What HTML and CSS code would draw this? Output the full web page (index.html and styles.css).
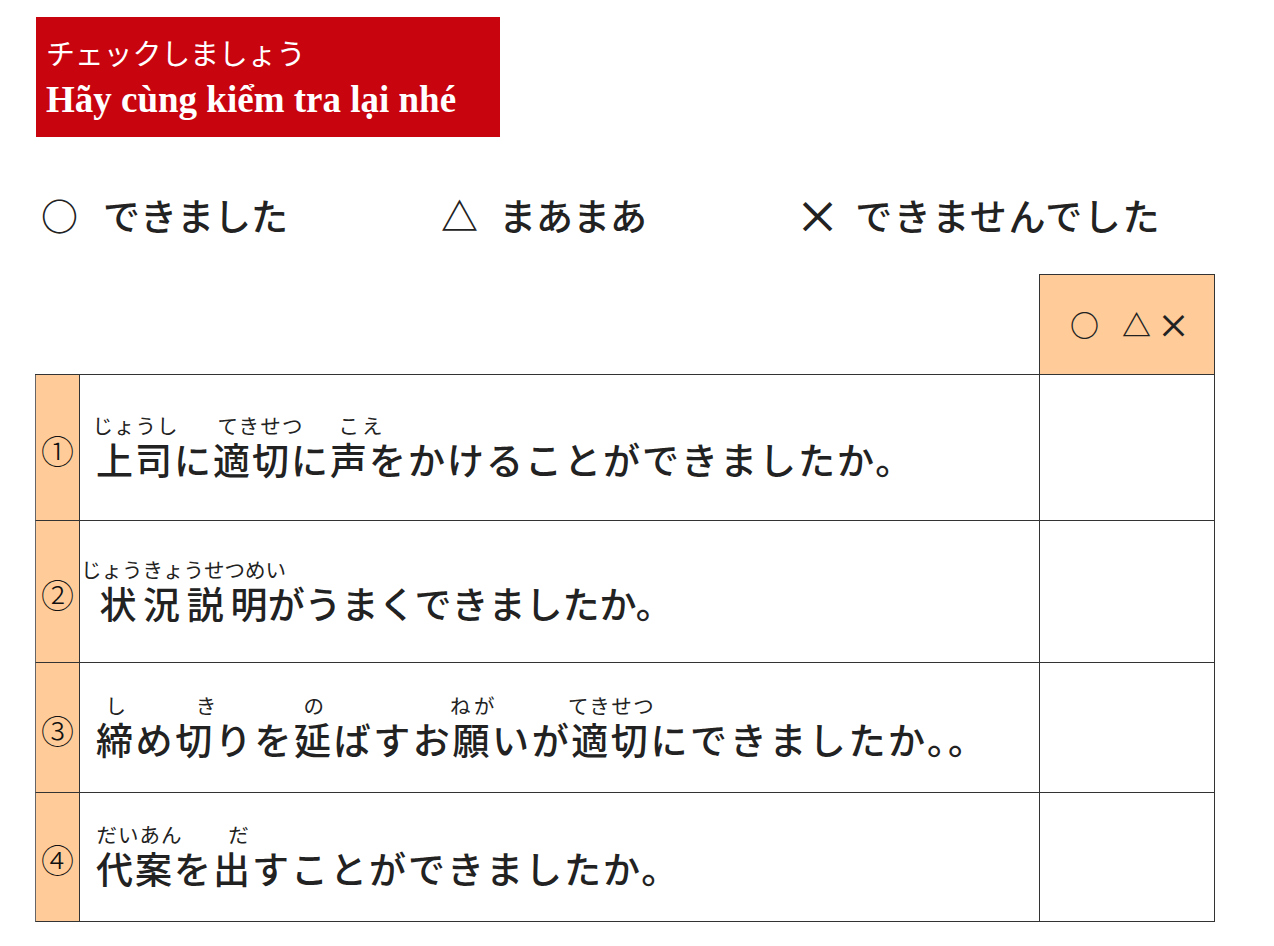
FILE: index.html
```html
<!DOCTYPE html>
<html lang="ja">
<head>
<meta charset="utf-8">
<title>チェックしましょう</title>
<link rel="stylesheet" href="styles.css">
</head>
<body>
<div class="page">
  <div class="banner">
    <div class="banner-jp">チェックしましょう</div>
    <div class="banner-vi" lang="vi">Hãy cùng kiểm tra lại nhé</div>
  </div>

  <div class="legend">
    <div class="legend-item"><span class="sym">○</span><span class="legend-text">できました</span></div>
    <div class="legend-item legend-item-tight"><span class="sym">△</span><span class="legend-text">まあまあ</span></div>
    <div class="legend-item"><span class="sym sym-x">×</span><span class="legend-text legend-wide">できませんでした</span></div>
  </div>

  <div class="sheet">
    <div class="head-blank"></div>
    <div class="head-check"><span class="sym hc-o">○</span><span class="sym hc-t">△</span><span class="sym sym-x">×</span></div>

    <div class="num">①</div>
    <div class="q"><p class="q-text"><ruby>上司<rt>じょうし</rt></ruby>に<ruby>適切<rt class="shift-8">てきせつ</rt></ruby>に<ruby>声<rt class="shift-11">こえ</rt></ruby>をかけることができましたか。</p></div>
    <div class="check"></div>

    <div class="num">②</div>
    <div class="q"><p class="q-text q-tight"><ruby class="ruby-wide">状況説明<rt>じょうきょうせつめい</rt></ruby>がうまくできましたか。</p></div>
    <div class="check"></div>

    <div class="num">③</div>
    <div class="q"><p class="q-text q-wide"><ruby>締<rt>し</rt></ruby>め<ruby>切<rt class="shift-11">き</rt></ruby>りを<ruby>延<rt>の</rt></ruby>ばすお<ruby>願<rt>ねが</rt></ruby>いが<ruby>適切<rt>てきせつ</rt></ruby>にできましたか。。</p></div>
    <div class="check"></div>

    <div class="num">④</div>
    <div class="q"><p class="q-text"><ruby>代案<rt class="shift-4">だいあん</rt></ruby>を<ruby>出<rt class="shift-6">だ</rt></ruby>すことができましたか。</p></div>
    <div class="check"></div>
  </div>
</div>
</body>
</html>
```

FILE: styles.css
```css
html, body {
  margin: 0;
  background: #ffffff;
}

body {
  font-family: "Noto Sans CJK JP", "Noto Sans", sans-serif;
  color: #222222;
}

.page {
  padding: 17px 0 0 35px;
}

/* ---------- banner ---------- */
.banner {
  box-sizing: border-box;
  width: 464px;
  height: 120px;
  margin-left: 1px;
  padding: 16px 0 0 10px;
  background: #c8040f;
  color: #ffffff;
}

.banner-jp {
  font-size: 29px;
  line-height: 38px;
  font-weight: 400;
  letter-spacing: -0.2px;
}

.banner-vi {
  margin-top: 7px;
  font-family: "Liberation Serif", "Times New Roman", serif;
  font-weight: 700;
  font-size: 37px;
  line-height: 44px;
}

/* ---------- legend ---------- */
.legend {
  display: grid;
  grid-template-columns: 400px 358px auto;
  margin-top: 54px;
  padding-left: 6px;
  font-size: 37px;
  line-height: 48px;
}

.legend-item {
  display: flex;
  align-items: center;
  gap: 25px;
}

.legend-item-tight {
  gap: 21px;
}

.legend-text {
  font-weight: 500;
}

.legend-wide {
  letter-spacing: 1.6px;
}

.sym {
  font-weight: 700;
  font-feature-settings: "fwid" 1;
  line-height: 1;
}

.sym-x {
  font-weight: 500;
}

.legend .sym-x {
  font-size: 1.22em;
  margin-left: -4px;
  margin-right: -10px;
}

/* ---------- sheet ---------- */
.sheet {
  display: grid;
  grid-template-columns: 45px 960px 175px;
  grid-template-rows: 101px 146px 142px 130px 129px;
  margin-top: 35px;
}

.sheet > div {
  box-sizing: border-box;
}

.head-blank {
  grid-column: 1 / 3;
  border-right: 1px solid #333333;
  border-bottom: 1px solid #333333;
}

.head-check {
  display: flex;
  align-items: center;
  padding-left: 30px;
  background: #ffcc99;
  border-top: 1px solid #333333;
  border-right: 1px solid #333333;
  border-bottom: 1px solid #333333;
  font-size: 29px;
  color: #222222;
}

.hc-o {
  margin-right: 23px;
}

.hc-t {
  margin-right: 6px;
}

.head-check .sym-x {
  font-size: 33px;
}

.num {
  display: flex;
  align-items: center;
  justify-content: center;
  padding-top: 4px;
  background: #ffcc99;
  border-left: 1px solid #666666;
  border-right: 1px solid #333333;
  border-bottom: 1px solid #333333;
  font-size: 33px;
  font-weight: 300;
  color: #111111;
}

.q {
  display: flex;
  align-items: center;
  padding-left: 16px;
  border-right: 1px solid #333333;
  border-bottom: 1px solid #333333;
}

.check {
  border-right: 1px solid #333333;
  border-bottom: 1px solid #333333;
}

.q-text {
  margin: 6px 0 0;
  font-size: 37px;
  font-weight: 500;
  line-height: 1.2;
  letter-spacing: 2px;
  white-space: nowrap;
}

.q-tight {
  letter-spacing: 0;
}

.q-wide {
  letter-spacing: 2.6px;
}

.q-text rt {
  position: relative;
  top: -5px;
  margin: 0 -4px;
  font-size: 20.5px;
  font-weight: 400;
  letter-spacing: 0;
}

.q-text rt.shift-4 {
  left: 4px;
}

.q-text rt.shift-6 {
  left: 6px;
}

.q-text rt.shift-8 {
  left: 8px;
}

.q-text rt.shift-11 {
  left: 11px;
}

.ruby-wide rt {
  margin: 0 -15px;
}
```
